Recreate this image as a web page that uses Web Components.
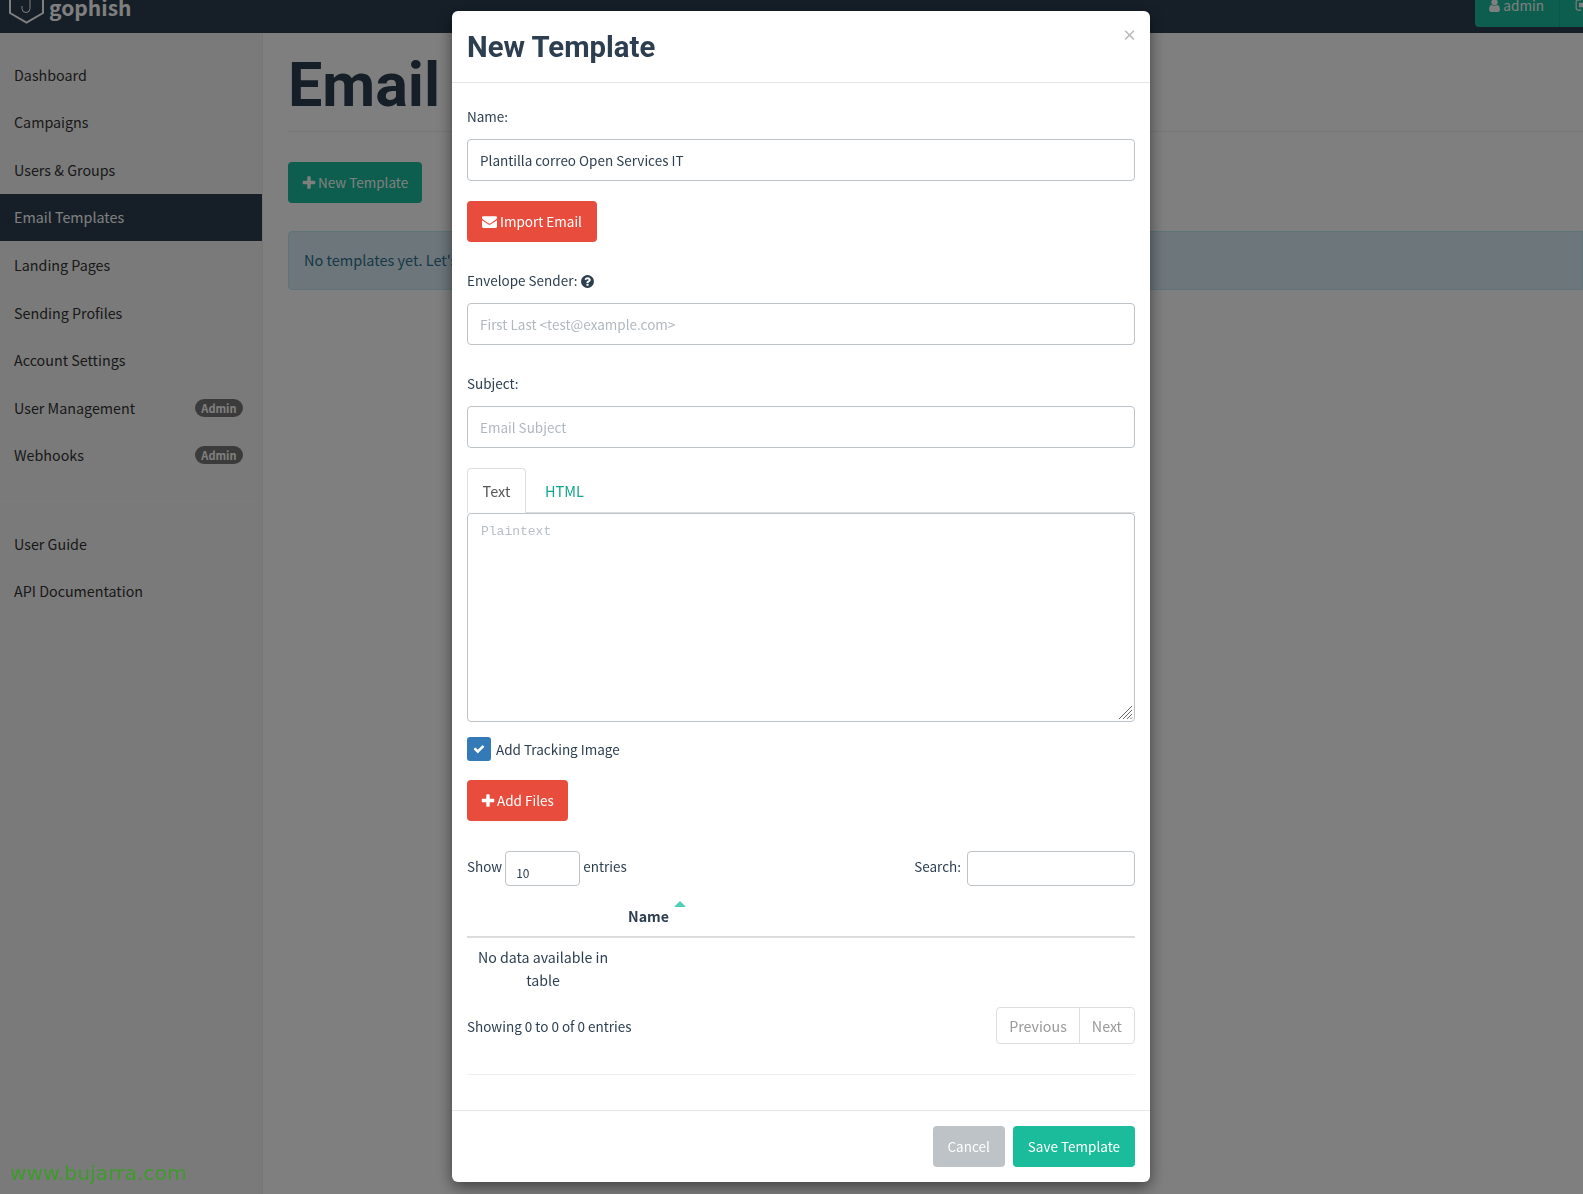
<!DOCTYPE html>
<html lang="en">
<head>
<meta charset="utf-8">
<title>Gophish - Email Templates</title>
<style>
  html, body { margin: 0; height: 100%; overflow: hidden; }
  body {
    font: 13.5px/23px "Noto Sans CJK SC", "Open Sans", sans-serif;
    color: #2c3e50;
    background: #fff;
  }
</style>
</head>
<body>

<gp-app>
  <gp-navbar slot="top"></gp-navbar>
  <gp-sidebar slot="side">
    <gp-nav-item>Dashboard</gp-nav-item>
    <gp-nav-item>Campaigns</gp-nav-item>
    <gp-nav-item>Users &amp; Groups</gp-nav-item>
    <gp-nav-item active>Email Templates</gp-nav-item>
    <gp-nav-item>Landing Pages</gp-nav-item>
    <gp-nav-item>Sending Profiles</gp-nav-item>
    <gp-nav-item>Account Settings</gp-nav-item>
    <gp-nav-item badge="Admin">User Management</gp-nav-item>
    <gp-nav-item badge="Admin">Webhooks</gp-nav-item>
    <gp-nav-divider></gp-nav-divider>
    <gp-nav-item>User Guide</gp-nav-item>
    <gp-nav-item>API Documentation</gp-nav-item>
  </gp-sidebar>
  <gp-page slot="main">
    <span slot="title">Email Templates</span>
    <gp-button slot="action" kind="primary" icon="plus">New Template</gp-button>
    <span slot="alert">No templates yet. Let's create a template!</span>
  </gp-page>
</gp-app>

<gp-backdrop></gp-backdrop>

<gp-modal>
  <span slot="title">New Template</span>

  <gp-field style="margin-top:23px">
    <span slot="label">Name:</span>
    <gp-input>Plantilla correo Open Services IT</gp-input>
  </gp-field>
  <gp-button kind="danger" icon="envelope" style="margin-top:20px">Import Email</gp-button>

  <gp-field style="margin-top:28px">
    <span slot="label">Envelope Sender:<gp-icon name="question" size="15" style="vertical-align:-3px;margin-left:2px"></gp-icon></span>
    <gp-input placeholder>First Last &lt;test@example.com&gt;</gp-input>
  </gp-field>
  <gp-field style="margin-top:28px">
    <span slot="label">Subject:</span>
    <gp-input placeholder>Email Subject</gp-input>
  </gp-field>

  <gp-tabs style="margin-top:20px">
    <span slot="active">Text</span>
    <span slot="other">HTML</span>
  </gp-tabs>
  <gp-textarea>Plaintext</gp-textarea>

  <gp-checkbox style="margin-top:15px">Add Tracking Image</gp-checkbox>
  <gp-button kind="danger" icon="plus" style="margin-top:19px">Add Files</gp-button>

  <gp-datatable style="margin-top:30px"></gp-datatable>

  <gp-button slot="footer" kind="muted">Cancel</gp-button>
  <gp-button slot="footer" kind="primary">Save Template</gp-button>
</gp-modal>

<gp-watermark>www.bujarra.com</gp-watermark>

<script>
const FA = {
  plus: 'M1600 736v192q0 40-28 68t-68 28h-416v416q0 40-28 68t-68 28h-192q-40 0-68-28t-28-68v-416h-416q-40 0-68-28t-28-68v-192q0-40 28-68t68-28h416v-416q0-40 28-68t68-28h192q40 0 68 28t28 68v416h416q40 0 68 28t28 68z',
  envelope: 'M1792 710v794q0 66-47 113t-113 47h-1472q-66 0-113-47t-47-113v-794q44 49 101 87 362 246 497 345 57 42 92.5 65.5t94.5 48 110 24.5h2q51 0 110-24.5t94.5-48 92.5-65.5q170-123 498-345 57-39 100-87zm0-294q0 79-49 151t-122 123q-376 261-468 325-10 7-42.5 30.5t-54 38-52 32.5-57.5 27-50 9h-2q-23 0-50-9t-57.5-27-52-32.5-54-38-42.5-30.5q-91-64-262-182.5t-205-142.5q-62-42-117-115.5t-55-136.5q0-78 41.5-130t118.5-52h1472q65 0 112.5 47t47.5 113z',
  question: 'M1024 1376v-192q0-14-9-23t-23-9h-192q-14 0-23 9t-9 23v192q0 14 9 23t23 9h192q14 0 23-9t9-23zm256-672q0-88-55.5-163t-138.5-116-170-41q-243 0-371 213-15 24 8 42l132 100q7 6 19 6 16 0 25-12 53-68 86-92 34-24 86-24 48 0 85.5 26t37.5 59q0 38-20 61t-68 45q-63 28-115.5 86.5t-52.5 125.5v36q0 14 9 23t23 9h192q14 0 23-9t9-23q0-19 21.5-49.5t54.5-49.5q32-18 49-28.5t46-35 44.5-48 28-60.5 12.5-81zm384 192q0 209-103 385.5t-279.5 279.5-385.5 103-385.5-103-279.5-279.5-103-385.5 103-385.5 279.5-279.5 385.5-103 385.5 103 279.5 279.5 103 385.5z',
  user: 'M1536 1399q0 109-62.5 187t-150.5 78h-854q-88 0-150.5-78t-62.5-187q0-85 8.5-160.5t31.5-152 58.5-131 94-89 134.5-34.5q131 128 313 128t313-128q76 0 134.5 34.5t94 89 58.5 131 31.5 152 8.5 160.5zm-256-887q0 159-112.5 271.5t-271.5 112.5-271.5-112.5-112.5-271.5 112.5-271.5 271.5-112.5 271.5 112.5 112.5 271.5z',
  check: 'M1671 566q0 40-28 68l-724 724-136 136q-28 28-68 28t-68-28l-136-136-362-362q-28-28-28-68t28-68l136-136q28-28 68-28t68 28l294 295 656-657q28-28 68-28t68 28l136 136q28 28 28 68z',
  signout: 'M704 1440q0 4 1 20t.5 26.5-3 23.5-10 19.5-20.5 6.5h-320q-119 0-203.5-84.5t-84.5-203.5v-704q0-119 84.5-203.5t203.5-84.5h320q13 0 22.5 9.5t9.5 22.5q0 4 1 20t.5 26.5-3 23.5-10 19.5-20.5 6.5h-320q-66 0-113 47t-47 113v704q0 66 47 113t113 47h312l11.5 1 11.5 3 8 5.5 7 9 2 13.5zm928-544q0 26-19 45l-544 544q-19 19-45 19t-45-19-19-45v-288h-448q-26 0-45-19t-19-45v-384q0-26 19-45t45-19h448v-288q0-26 19-45t45-19 45 19l544 544q19 19 19 45z'
}

// small helper, every element is just a shadow root with fixed markup
class Base extends HTMLElement {
  constructor () {
    super()
    this.attachShadow({ mode: 'open' })
    this.shadowRoot.innerHTML = this.markup()
  }
  markup () { return '' }
}

customElements.define('gp-icon', class extends Base {
  markup () {
    const s = this.getAttribute('size') || 16
    return `<style>:host{display:inline-block;line-height:0}</style>
      <svg width="${s}" height="${s}" viewBox="0 0 1792 1792" fill="currentColor"><path d="${FA[this.getAttribute('name')]}"/></svg>`
  }
})

customElements.define('gp-app', class extends Base {
  markup () {
    return `<style>
      :host{display:grid;grid-template-columns:262px 1fr;grid-template-rows:33px 1fr;height:100vh}
      .top{grid-column:1 / 3}
    </style>
    <div class="top"><slot name="top"></slot></div>
    <slot name="side"></slot>
    <slot name="main"></slot>`
  }
})

customElements.define('gp-navbar', class extends Base {
  markup () {
    return `<style>
      :host{display:flex;height:33px;background:#2c3e50;justify-content:space-between;align-items:flex-end;overflow:hidden}
      .brand{display:flex;align-items:flex-end;padding-left:9px;gap:5px;color:#fff}
      .brand svg{display:block;margin-bottom:9px}
      .brand b{font-size:21px;line-height:30px;margin-bottom:11px;font-weight:700}
      .user{display:flex;margin:0 -30px 6px 0;height:40px;color:#fff;background:#1abc9c;border-radius:0 0 0 4px}
      .user div{display:flex;align-items:flex-end;gap:1px;padding:0 15px 10px;font-size:13.6px;line-height:23px}
      .user div:first-child{padding-left:12px}
      .user div + div{border-left:1px solid #18a88c;padding-right:22px}
      gp-icon{margin-bottom:4px}
    </style>
    <div class="brand">
      <svg width="35" height="24" viewBox="0 0 35 24" fill="none" stroke="#fff" stroke-width="2">
        <path d="M1 -6V13L17.5 22.5L34 13V-6"/>
        <path stroke-width="1" d="M21 -2V8.5a4 4 0 0 1-8 0V6"/>
      </svg>
      <b>gophish</b>
    </div>
    <div class="user">
      <div><gp-icon name="user" size="15"></gp-icon>admin</div>
      <div><gp-icon name="signout" size="16"></gp-icon></div>
    </div>`
  }
})

customElements.define('gp-sidebar', class extends Base {
  markup () {
    return `<style>
      :host{display:block;background:#f5f5f5;padding-top:18px;border-right:1px solid #eee;box-sizing:content-box;width:262px;height:100%}
    </style><slot></slot>`
  }
})

customElements.define('gp-nav-item', class extends Base {
  markup () {
    const badge = this.getAttribute('badge')
    return `<style>
      :host{display:flex;box-sizing:border-box;height:47.55px;align-items:center;justify-content:space-between;padding:0 19px 1px 14px;color:#333;font-size:14.3px}
      :host([active]){background:#2c3e50;color:#fff}
      .badge{background:#777;color:#fff;font-size:11px;font-weight:700;line-height:18px;height:18px;padding:0 6.5px;border-radius:9px;margin-top:1.5px}
    </style><span><slot></slot></span>${badge ? `<span class="badge">${badge}</span>` : ''}`
  }
})

customElements.define('gp-nav-divider', class extends Base {
  markup () {
    return `<style>:host{display:block;height:1px;margin:19px 0 21px;background:#f0f0f0}</style>`
  }
})

customElements.define('gp-button', class extends Base {
  markup () {
    const icon = this.getAttribute('icon')
    return `<style>
      :host{display:inline-flex;box-sizing:border-box;height:41px;align-items:center;gap:2px;padding:0 15px;border-radius:4px;color:#fff;font-size:13.5px;vertical-align:top}
      :host([kind=primary]){background:#1abc9c}
      :host([kind=danger]){background:#e74c3c}
      :host([kind=muted]){background:#bdc3c7}
      :host([icon=plus]){padding-right:14px}
      :host([icon=plus]) gp-icon{margin:0 -1px 0 -2px}
      :host([icon=envelope]){gap:3px}
    </style>
    ${icon ? `<gp-icon name="${icon}" size="${icon === 'envelope' ? 15 : 16}"></gp-icon>` : ''}<slot></slot>`
  }
})

customElements.define('gp-page', class extends Base {
  markup () {
    return `<style>
      :host{display:block;padding:0 0 0 26px;min-width:0}
      h1{margin:0;height:99px;box-sizing:border-box;padding-top:21px;font:700 61px/62px Roboto,sans-serif;color:#2c3e50;border-bottom:1px solid #eee;white-space:nowrap;overflow:hidden}
      .act{margin-top:30px;height:41px}
      .alert{margin-top:28px;height:59px;box-sizing:border-box;padding:0 15px 3px;display:flex;align-items:center;background:#d9edf7;border:1px solid #bce8f1;border-radius:4px 0 0 4px;color:#31708f;font-size:14.5px}
    </style>
    <h1><slot name="title"></slot></h1>
    <div class="act"><slot name="action"></slot></div>
    <div class="alert"><slot name="alert"></slot></div>`
  }
})

customElements.define('gp-backdrop', class extends Base {
  markup () {
    return `<style>:host{position:fixed;inset:0;background:rgba(0,0,0,.5)}</style>`
  }
})

customElements.define('gp-modal', class extends Base {
  markup () {
    return `<style>
      :host{position:fixed;left:452px;top:11px;width:698px;height:1171px;box-sizing:border-box;display:flex;flex-direction:column;background:#fff;border-radius:6px;box-shadow:0 5px 15px rgba(0,0,0,.5)}
      header{box-sizing:border-box;height:72px;border-bottom:1px solid #e5e5e5;position:relative;padding:17px 0 0 15px}
      h4{margin:0;font:700 29.3px/38px Roboto,sans-serif;color:#2c3e50}
      .close{position:absolute;right:13px;top:12px;font-weight:700;font-size:15px;line-height:24px;color:#bbb}
      .body{flex:1;padding:0 15px;display:block}
      footer{border-top:1px solid #e5e5e5;padding:15px;display:flex;justify-content:flex-end;gap:8px}
    </style>
    <header><h4><slot name="title"></slot></h4><span class="close">×</span></header>
    <div class="body"><slot></slot></div>
    <footer><slot name="footer"></slot></footer>`
  }
})

customElements.define('gp-field', class extends Base {
  markup () {
    return `<style>
      :host{display:block}
      .l{display:block;height:23px;margin:-1px 0 11px}
    </style><span class="l"><slot name="label"></slot></span><slot></slot>`
  }
})

customElements.define('gp-input', class extends Base {
  markup () {
    return `<style>
      :host{display:flex;box-sizing:border-box;height:42px;align-items:center;padding:1px 12px 0;background:#fff;border:1px solid #bdc3c7;border-radius:4px;color:#2c3e50}
      :host([placeholder]){color:#b0b8bf}
    </style><slot></slot>`
  }
})

customElements.define('gp-tabs', class extends Base {
  markup () {
    return `<style>
      :host{display:flex;height:45px;box-sizing:border-box;border-bottom:1px solid #ddd;font-size:14.5px}
      div{box-sizing:border-box;display:flex;align-items:center}
      .on{height:45px;width:59px;border:1px solid #ddd;border-bottom-color:#fff;border-radius:4px 4px 0 0;color:#555;justify-content:center}
      .off{color:#15a589;padding:0 15px 0 19px}
    </style>
    <div class="on"><slot name="active"></slot></div>
    <div class="off"><slot name="other"></slot></div>`
  }
})

customElements.define('gp-textarea', class extends Base {
  markup () {
    return `<style>
      :host{display:block;position:relative;box-sizing:border-box;height:209px;padding:6px 13px;border:1px solid #bdc3c7;border-radius:4px;font:13px/23px "Liberation Mono",monospace;color:#b8bfc5}
      svg{position:absolute;right:1px;bottom:1px}
    </style><slot></slot>
    <svg width="15" height="15" viewBox="0 0 15 15" stroke="#666" stroke-width="1"><path d="M1 14L14 1M5 14L14 5M9 14L14 9M12.5 14L14 12.5"/></svg>`
  }
})

customElements.define('gp-checkbox', class extends Base {
  markup () {
    return `<style>
      :host{display:flex;align-items:center;gap:5px;height:24px}
      .box{display:flex;width:24px;height:24px;border-radius:3px;background:#337ab7;color:#fff;align-items:center;justify-content:center}
    </style><span class="box"><gp-icon name="check" size="12"></gp-icon></span><span><slot></slot></span>`
  }
})

customElements.define('gp-datatable', class extends Base {
  markup () {
    return `<style>
      :host{display:block}
      .ctl{display:flex;justify-content:space-between;height:35px}
      .ctl > div{display:flex;gap:3px;align-items:flex-start;padding:0}
      .ctl span{line-height:31px}
      .sel,.srch{box-sizing:border-box;height:35px;border:1px solid #bdc3c7;border-radius:4px;background:#fff}
      .sel{width:75px;padding:9px 0 0 10px;font-size:12px;line-height:23px}
      .srch{width:168px;margin-left:3px}
      .head{display:grid;grid-template-columns:152px 1fr;height:50px;border-bottom:2px solid #ddd}
      .name{position:relative;align-self:end;padding:0 0 8px 9px;font-weight:700;font-size:14.2px}
      .name i{position:absolute;left:55px;top:-4px;border:6px solid transparent;border-top:0;border-bottom-color:#4fd0b6}
      .cell{width:152px;box-sizing:border-box;padding:8px 8px 0;text-align:center;font-size:14.2px}
      .foot{display:flex;justify-content:space-between;align-items:center;margin-top:15px;height:37px}
      .foot > span{padding-top:2px}
      .pager{display:flex;height:37px;box-sizing:border-box;border:1px solid #ddd;border-radius:4px;color:#999;font-size:14.25px}
      .pager span{display:flex;align-items:center;padding:0 12px}
      .pager span + span{border-left:1px solid #ddd}
      hr{border:0;border-top:1px solid #eee;margin:30px 0 0}
    </style>
    <div class="ctl">
      <div><span>Show</span><div class="sel">10</div><span>entries</span></div>
      <div><span>Search:</span><div class="srch"></div></div>
    </div>
    <div class="head"><div></div><div class="name">Name<i></i></div></div>
    <div class="cell">No data available in table</div>
    <div class="foot"><span>Showing 0 to 0 of 0 entries</span>
      <div class="pager"><span>Previous</span><span>Next</span></div></div>
    <hr>`
  }
})

customElements.define('gp-watermark', class extends Base {
  markup () {
    return `<style>:host{position:fixed;left:10px;top:1160px;font:20.3px/26px "DejaVu Sans",sans-serif;color:#3d9b2b}</style><slot></slot>`
  }
})
</script>
</body>
</html>
